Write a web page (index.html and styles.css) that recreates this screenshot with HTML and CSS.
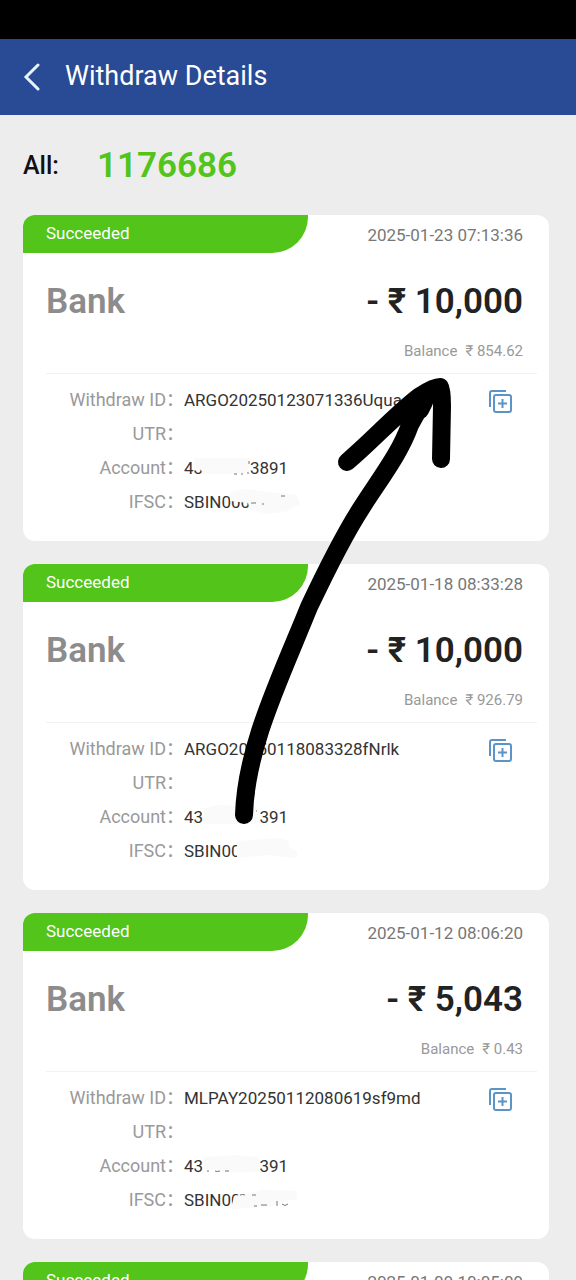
FILE: index.html
```html
<!DOCTYPE html>
<html lang="en">
<head>
<meta charset="utf-8">
<meta name="viewport" content="width=device-width, initial-scale=1">
<title>Withdraw Details</title>
<link rel="stylesheet" href="styles.css">
</head>
<body>
<svg class="sprite" aria-hidden="true">
  <symbol id="copy" viewBox="0 0 24 24">
    <path d="M2 18V4a2 2 0 0 1 2-2H18" />
    <rect x="6" y="6" width="17" height="17" rx="2" />
    <path d="M14.500 10v9M10 14.500h9" />
  </symbol>
</svg>
<div class="screen">
  <div class="status-bar"></div>
  <header class="app-bar">
    <button class="back" type="button" aria-label="Back">
      <svg viewBox="0 0 18 28"><path d="M15 2 3 14l12 12" /></svg>
    </button>
    <h1 class="title">Withdraw Details</h1>
  </header>
  <main class="content">
    <p class="total"><span class="total-label">All:</span><strong class="total-value">1176686</strong></p>

    <article class="card">
      <div class="card-top"><span class="status">Succeeded</span><time class="date">2025-01-23 07:13:36</time></div>
      <div class="summary"><h2 class="method">Bank</h2><span class="amount">- ₹ 10,000</span></div>
      <p class="balance"><span>Balance</span><span>₹ 854.62</span></p>
      <div class="details">
        <dl class="fields">
          <dt>Withdraw ID：</dt><dd>ARGO20250123071336Uqua.J</dd>
          <dt>UTR：</dt><dd></dd>
          <dt>Account：</dt><dd><span>43</span><span class="tail">3891</span>
            <svg class="smudge" viewBox="0 0 130 34"><path class="cover" d="M10 7h56l-1 14-12 2H19l-2-4-7-2z" /><path class="ink" d="M50 23h3M57 23h2M63 22h2M65 10v3" /></svg></dd>
          <dt>IFSC：</dt><dd><span>SBIN000</span>
            <svg class="smudge" viewBox="0 0 130 34"><path class="cover" d="M46 7l14-3 53 6 3 9-12 7-20 3-18-4-2-7-18-2z" /><path class="ink" d="M67 18h5M78 19h2M97 11h4" /></svg></dd>
        </dl>
        <button class="copy" type="button" aria-label="Copy withdraw ID"><svg><use href="#copy" /></svg></button>
      </div>
    </article>

    <article class="card">
      <div class="card-top"><span class="status">Succeeded</span><time class="date">2025-01-18 08:33:28</time></div>
      <div class="summary"><h2 class="method">Bank</h2><span class="amount">- ₹ 10,000</span></div>
      <p class="balance"><span>Balance</span><span>₹ 926.79</span></p>
      <div class="details">
        <dl class="fields">
          <dt>Withdraw ID：</dt><dd>ARGO20250118083328fNrlk</dd>
          <dt>UTR：</dt><dd></dd>
          <dt>Account：</dt><dd><span>43</span><span class="tail">391</span>
            <svg class="smudge" viewBox="0 0 130 34"><path class="cover" d="M20 8l12-3 40 2v17H20z" /><path class="ink" d="M72 11h1" /></svg></dd>
          <dt>IFSC：</dt><dd><span>SBIN00</span>
            <svg class="smudge" viewBox="0 0 130 34"><path class="cover" d="M53 7l45-3 7 4v5l8 5v6l-30-3-30 3z" /></svg></dd>
        </dl>
        <button class="copy" type="button" aria-label="Copy withdraw ID"><svg><use href="#copy" /></svg></button>
      </div>
    </article>

    <article class="card">
      <div class="card-top"><span class="status">Succeeded</span><time class="date">2025-01-12 08:06:20</time></div>
      <div class="summary"><h2 class="method">Bank</h2><span class="amount">- ₹ 5,043</span></div>
      <p class="balance"><span>Balance</span><span>₹ 0.43</span></p>
      <div class="details">
        <dl class="fields">
          <dt>Withdraw ID：</dt><dd>MLPAY20250112080619sf9md</dd>
          <dt>UTR：</dt><dd></dd>
          <dt>Account：</dt><dd><span>43</span><span class="tail">391</span>
            <svg class="smudge" viewBox="0 0 130 34"><path class="cover" d="M20 8l30-2 25 2v14l-20 2-35-4z" /><path class="ink" d="M23 22h2M31 22q2 1 5 0M41 22h4" /></svg></dd>
          <dt>IFSC：</dt><dd><span>SBIN00</span>
            <svg class="smudge" viewBox="0 0 130 34"><path class="cover" d="M50 13l30-6 33 1v8l-16 3-10 5-40 2z" /><path class="ink" d="M56 12q3-1 5 0M68 12h4M70 23h3M77 22h6M93 18v5M98 21q3 3 6 0" /></svg></dd>
        </dl>
        <button class="copy" type="button" aria-label="Copy withdraw ID"><svg><use href="#copy" /></svg></button>
      </div>
    </article>

    <article class="card">
      <div class="card-top"><span class="status">Succeeded</span><time class="date">2025-01-09 10:05:09</time></div>
    </article>
  </main>
  <svg class="arrow" viewBox="0 0 576 1280" aria-hidden="true">
    <path d="M244 815C246 747 280 679 309 607C326 571 345 533 362 507C382 476 400 453 410 425L426 396" />
    <path d="M347 462C373 440 395 415 420 396Q434 387 440 387Q442 390 442 406L441 459" />
    <path d="M408 420L424 402L420 410" />
  </svg>
</div>
</body>
</html>
```
FILE: styles.css
```css
* {
  box-sizing: border-box;
}

body {
  margin: 0;
  background: #ededed;
  color: #222;
  font-family: Roboto, "Noto Sans CJK SC", sans-serif;
}

h1, h2, p, dl, dd {
  margin: 0;
}

button {
  padding: 0;
  border: 0;
  background: none;
}

svg {
  display: block;
  fill: none;
}

.sprite {
  position: absolute;
  width: 0;
  height: 0;
}

.screen {
  position: relative;
  height: 100vh;
  overflow: hidden;
}

.status-bar {
  height: 39px;
  background: #000;
}

.app-bar {
  display: flex;
  align-items: center;
  gap: 24px;
  height: 76px;
  padding: 0 23px;
  background: #294a94;
  color: #fff;
}

.back svg {
  width: 18px;
  height: 28px;
  stroke: #e8f2ff;
  stroke-width: 3;
  stroke-linecap: round;
}

.title {
  font-size: 27px;
  font-weight: 400;
  line-height: 36px;
  padding-bottom: 3px;
}

.content {
  padding: 0 27px 0 23px;
}

.total {
  display: flex;
  align-items: center;
  gap: 38px;
  height: 100px;
}

.total-label {
  color: #111;
  font-size: 25px;
  font-weight: 500;
}

.total-value {
  color: #52c41a;
  font-size: 35px;
  font-weight: 600;
}

.card {
  margin-bottom: 23px;
  border-radius: 12px;
  background: #fff;
  overflow: hidden;
}

.card-top {
  display: flex;
  justify-content: space-between;
  padding-right: 26px;
}

.status {
  width: 57%;
  height: 38px;
  padding-left: 23px;
  border-bottom-right-radius: 36px;
  background: #52c41a;
  color: #fff;
  font-size: 17px;
  line-height: 36px;
}

.date {
  color: #777;
  font-size: 17px;
  line-height: 40px;
}

.summary {
  display: flex;
  justify-content: space-between;
  padding: 23px 26px 0 23px;
  font-size: 35px;
  line-height: 48px;
}

.method {
  color: #8c8c8c;
  font-size: 35px;
  font-weight: 600;
}

.amount {
  font-weight: 600;
}

.balance {
  display: flex;
  justify-content: flex-end;
  gap: 8px;
  padding: 15px 26px 12px;
  color: #999;
  font-size: 15px;
  line-height: 20px;
}

.details {
  display: flex;
  justify-content: space-between;
  margin: 0 12px 0 23px;
  padding: 9px 25px 22px 0;
  border-top: 1px solid #f2f2f2;
}

.fields {
  display: grid;
  grid-template-columns: 138px auto;
  line-height: 34px;
}

.fields dt {
  color: #999;
  font-size: 18px;
  text-align: right;
}

.fields dd {
  position: relative;
  display: flex;
  min-width: 104px;
  height: 34px;
  color: #333;
  font-size: 17px;
}

.tail {
  width: 85px;
  text-align: right;
}

.smudge {
  position: absolute;
  top: 0;
  left: 0;
  width: 130px;
  height: 34px;
}

.cover {
  fill: #fafafa;
}

.ink {
  stroke: #777;
}

.copy {
  align-self: flex-start;
  margin-top: 6px;
}

.copy svg {
  width: 24px;
  height: 24px;
  stroke: #5b94c8;
  stroke-width: 2;
}

.arrow {
  position: absolute;
  top: 0;
  left: 0;
  width: 576px;
  height: 1280px;
  stroke: #000;
  stroke-width: 18;
  stroke-linecap: round;
  stroke-linejoin: round;
  pointer-events: none;
}
```
